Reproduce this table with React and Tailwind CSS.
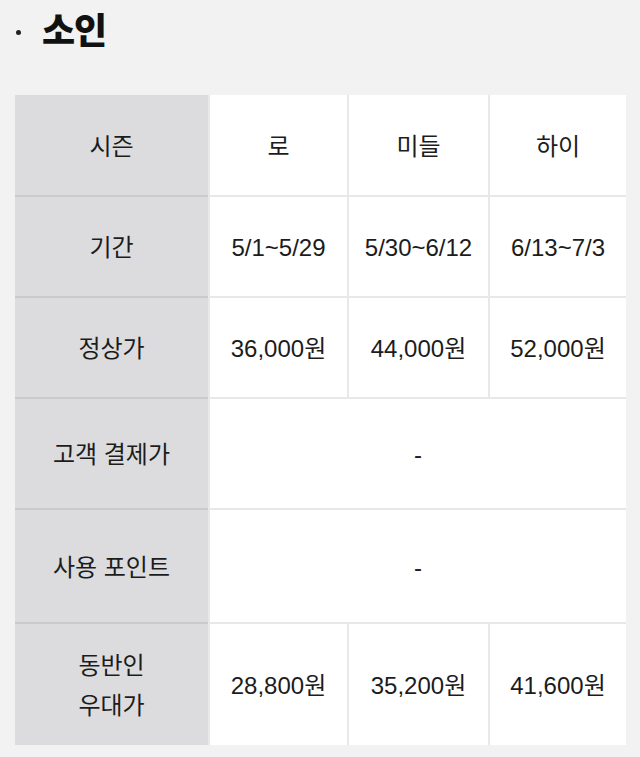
import React from "react";

const font = { fontFamily: '"Liberation Sans", "Noto Sans CJK KR", sans-serif' };

const rows = [
  { label: ["시즌"], cells: ["로", "미들", "하이"], h: "h-[102px]" },
  { label: ["기간"], cells: ["5/1~5/29", "5/30~6/12", "6/13~7/3"], h: "h-[101px]" },
  { label: ["정상가"], cells: ["36,000원", "44,000원", "52,000원"], h: "h-[101px]" },
  { label: ["고객 결제가"], span: "-", h: "h-[111px]" },
  { label: ["사용 포인트"], span: "-", h: "h-[114px]" },
  { label: ["동반인", "우대가"], cells: ["28,800원", "35,200원", "41,600원"], h: "h-[121px]", last: true },
];

export default function App() {
  return (
    <div className="w-[640px] h-[757px] bg-[#f2f2f2] text-[#1c1c1c]" style={font}>
      {/* title */}
      <div className="h-[95px] pt-[8px] pl-[16px] flex items-start">
        <div className="h-[48px] flex items-center w-[26px]">
          <span className="block w-[5px] h-[5px] rounded-full bg-[#222]" />
        </div>
        <h2 className="text-[36px] leading-[48px] font-extrabold tracking-[-1px] text-[#111]">소인</h2>
      </div>

      {/* price table */}
      <div className="ml-[15px] w-[611px] grid grid-cols-[193px_139px_141px_138px] text-[24px]">
        {rows.map((r, i) => (
          <React.Fragment key={i}>
            <div
              className={`${r.h} pt-[3px] bg-[#dcdcde] flex flex-col items-center justify-center leading-[40px] ${
                r.last ? "" : "border-b-2 border-black/[0.08]"
              }`}
            >
              {r.label.map((l) => (
                <span key={l}>{l}</span>
              ))}
            </div>
            {r.span ? (
              <div
                className={`${r.h} pt-[3px] col-span-3 bg-white border-l-2 border-[#e8e8e8] flex items-center justify-center ${
                  r.last ? "" : "border-b-2"
                }`}
              >
                {r.span}
              </div>
            ) : (
              r.cells.map((c) => (
                <div
                  key={c}
                  className={`${r.h} pt-[3px] bg-white border-l-2 border-[#e8e8e8] flex items-center justify-center whitespace-nowrap ${
                    r.last ? "" : "border-b-2"
                  }`}
                >
                  {c}
                </div>
              ))
            )}
          </React.Fragment>
        ))}
      </div>
    </div>
  );
}
